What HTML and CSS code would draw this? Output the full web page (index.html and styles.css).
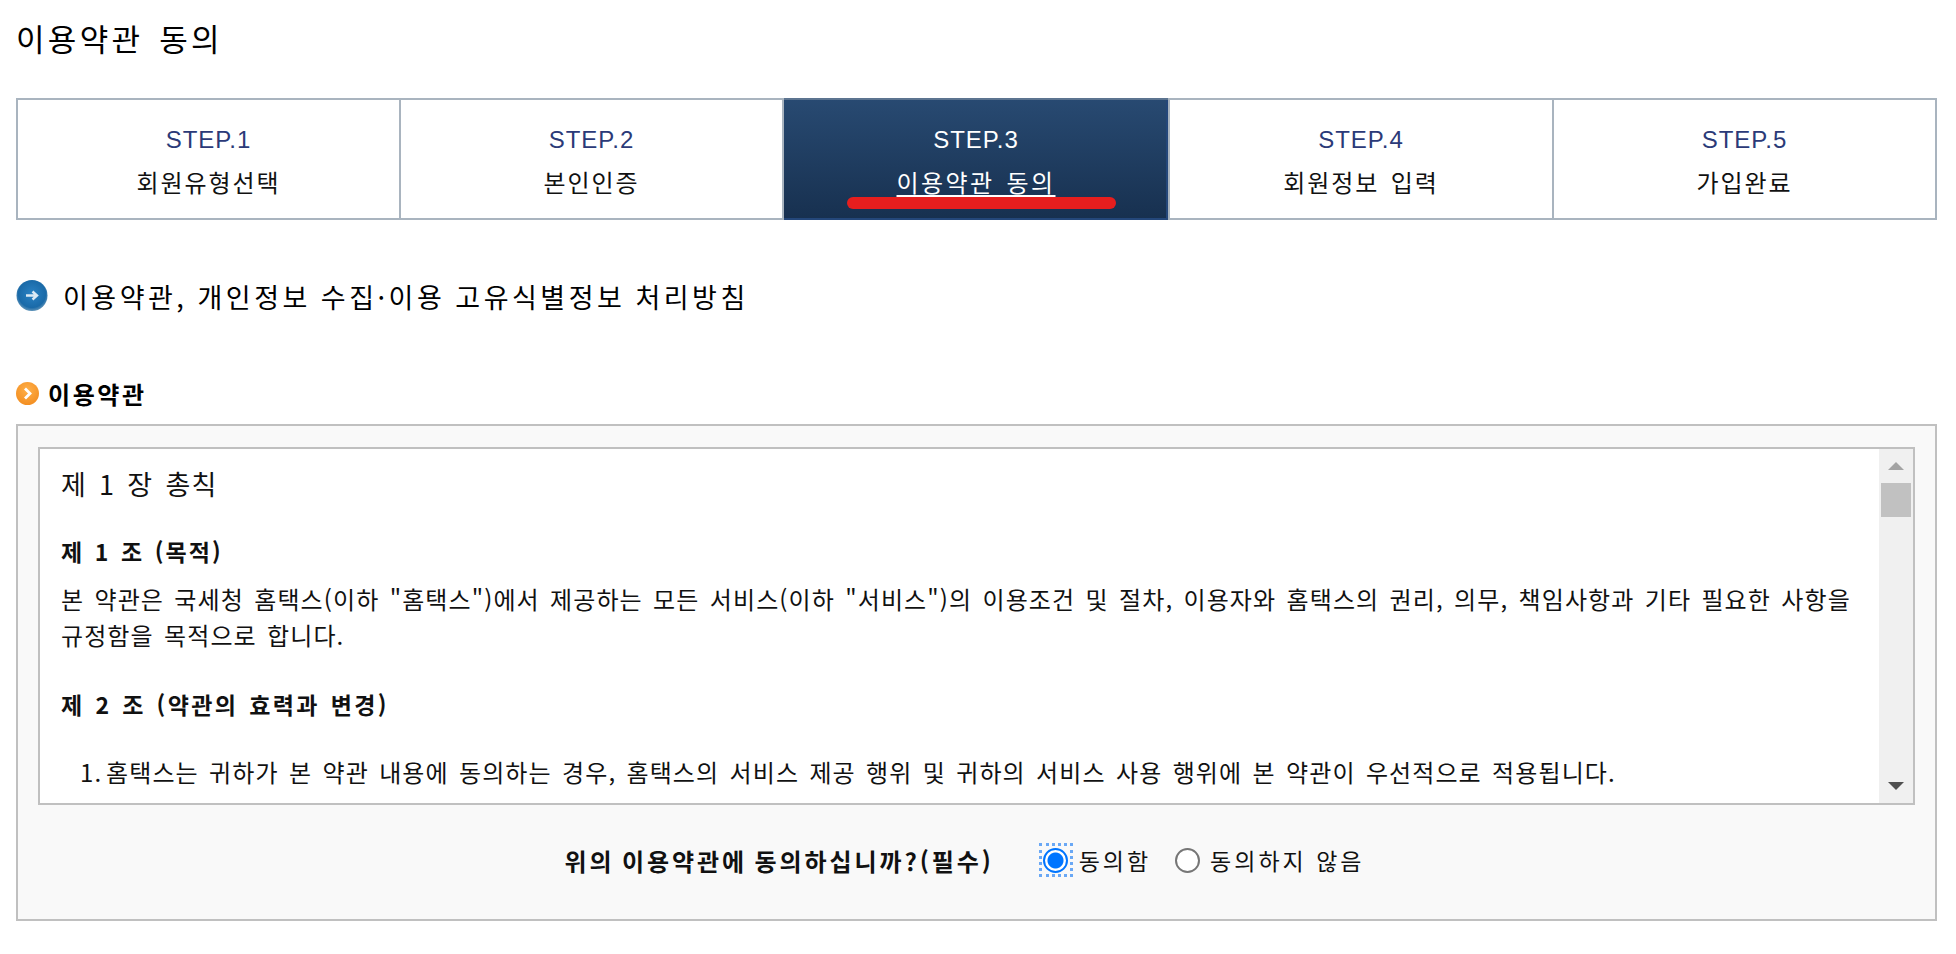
FILE: index.html
```html
<!DOCTYPE html>
<html lang="ko">
<head>
<meta charset="utf-8">
<title>이용약관 동의</title>
<link rel="stylesheet" href="styles.css">
</head>
<body>
<h1 class="page-title">이용약관 동의</h1>
<ol class="steps">
  <li class="step"><span class="step-no">STEP.1</span><span class="step-name">회원유형선택</span></li>
  <li class="step"><span class="step-no">STEP.2</span><span class="step-name">본인인증</span></li>
  <li class="step step-active"><span class="step-no">STEP.3</span><span class="step-name">이용약관 동의</span><span class="red-mark"></span></li>
  <li class="step"><span class="step-no">STEP.4</span><span class="step-name">회원정보 입력</span></li>
  <li class="step"><span class="step-no">STEP.5</span><span class="step-name">가입완료</span></li>
</ol>
<h2 class="section-title">
  <svg width="32" height="32" viewBox="0 0 32 32"><defs><radialGradient id="b" cx="50%" cy="45%" r="55%"><stop offset="0" stop-color="#2a82c4"/><stop offset=".8" stop-color="#1a6aa8"/><stop offset="1" stop-color="#5f93b8"/></radialGradient></defs><circle cx="16" cy="15.5" r="15.5" fill="url(#b)"/><path d="M10 15.5h11M16.5 11.500l4.500 4-4.500 4" fill="none" stroke="#dbe9f4" stroke-width="2.400"/></svg>
  <span>이용약관, 개인정보 수집·이용 고유식별정보 처리방침</span>
</h2>
<h3 class="sub-title">
  <svg width="23" height="23" viewBox="0 0 23 23"><defs><radialGradient id="o" cx="50%" cy="35%" r="70%"><stop offset="0" stop-color="#ffb04a"/><stop offset="1" stop-color="#f28c1e"/></radialGradient></defs><circle cx="11.500" cy="11.500" r="11.500" fill="url(#o)"/><path d="M9 6.500l5 5-5 5" fill="none" stroke="#fff" stroke-width="2.800"/></svg>
  <span>이용약관</span>
</h3>
<section class="panel">
  <div class="terms">
    <div class="terms-text">
      <p class="chapter">제 1 장 총칙</p>
      <p class="article">제 1 조 (목적)</p>
      <p class="body-text">본 약관은 국세청 홈택스(이하 "홈택스")에서 제공하는 모든 서비스(이하 "서비스")의 이용조건 및 절차, 이용자와 홈택스의 권리, 의무, 책임사항과 기타 필요한 사항을 규정함을 목적으로 합니다.</p>
      <p class="article article-2">제 2 조 (약관의 효력과 변경)</p>
      <p class="list-item"><span class="list-no">1. </span>홈택스는 귀하가 본 약관 내용에 동의하는 경우, 홈택스의 서비스 제공 행위 및 귀하의 서비스 사용 행위에 본 약관이 우선적으로 적용됩니다.</p>
    </div>
    <div class="scrollbar">
      <span class="arrow-up"></span>
      <span class="thumb"></span>
      <span class="arrow-down"></span>
    </div>
  </div>
  <div class="agree">
    <strong class="agree-q">위의 이용약관에 동의하십니까?(필수)</strong>
    <span class="radio-focus"><span class="radio radio-on"></span></span><span class="radio-label">동의함</span>
    <span class="radio"></span><span class="radio-label">동의하지 않음</span>
  </div>
</section>
</body>
</html>
```
FILE: styles.css
```css
* { box-sizing: border-box; }
html, body { margin: 0; padding: 0; }
body {
  background: #fff;
  color: #111;
  font-family: "Noto Sans CJK KR", "Liberation Sans", sans-serif;
  padding: 0 19px 0 16px;
  height: 954px;
  overflow: hidden;
}
.page-title { margin: 0; padding-top: 18px; height: 98px; font-size: 31px; font-weight: 400; line-height: 40px; letter-spacing: 3.3px; word-spacing: 4px; color: #000; }
.steps { display: grid; grid-template-columns: 381px 383px 386px 384px 383px; list-style: none; margin: 0; padding: 0; height: 122px; border: 2px solid #a9b4bf; }
.step { display: flex; flex-direction: column; align-items: center; border-left: 2px solid #a9b4bf; padding-top: 20px; position: relative; }
.step:first-child { border-left: 0; }
.step-no { font-family: "Liberation Sans", sans-serif; font-size: 24px; line-height: 40px; letter-spacing: 1px; color: #2b3a78; }
.step-name { font-size: 24px; line-height: 44px; letter-spacing: 1.9px; word-spacing: 3px; color: #111; }
.step-active { background: linear-gradient(#284a72, #17304f) padding-box; margin: -2px 0; height: 122px; padding-top: 22px; box-shadow: inset 0 4px 0 -2px #5c7490, inset -2px 0 0 #24477a, inset 0 -2px 0 #24477a, inset 0 2px 0 #24477a; }
.step-active .step-no { color: #fff; }
.step-active .step-name { color: #fff; text-decoration: underline; text-underline-offset: 3px; letter-spacing: 2.4px; }
.red-mark { position: absolute; left: 63px; top: 99px; width: 269px; height: 12px; border-radius: 6px; background: #e61e1e; }
.section-title { display: flex; align-items: center; gap: 15px; margin: 0; padding-top: 47px; height: 150px; padding-bottom: 45px; font-size: 27px; font-weight: 400; color: #000; }
.section-title span { letter-spacing: 3.5px; word-spacing: -1px; }
.sub-title { display: flex; align-items: center; gap: 9px; margin: 0; height: 54px; padding-bottom: 8px; font-size: 24px; font-weight: 700; color: #000; }
.sub-title span { letter-spacing: 2.6px; }
.panel { height: 497px; border: 2px solid #c0c0c0; background: #f9f9f9; padding: 21px 20px 0; }
.terms { display: flex; height: 358px; border: 2px solid #c0c0c0; background: #fff; }
.terms-text { flex: 1; padding: 15px 21px 0; font-size: 24px; line-height: 36px; overflow: hidden; letter-spacing: 1.1px; word-spacing: 2.5px; word-break: keep-all; }
.terms-text p { margin: 0; }
.chapter { font-size: 27px; line-height: 40px; word-spacing: 3.5px; }
.article { font-weight: 700; margin-top: 29px !important; font-size: 23px; letter-spacing: 2.1px; word-spacing: 2px; }
.article-2 { margin-top: 33px !important; letter-spacing: 2.4px; }
.body-text { margin-top: 12px !important; }
.list-item { margin-top: 32px !important; padding-left: 19px; }
.list-no { word-spacing: -4px; }
.scrollbar { width: 34px; background: #f0f0f0; position: relative; }
.thumb { position: absolute; left: 2px; right: 2px; top: 34px; height: 34px; background: #c1c1c1; }
.arrow-up, .arrow-down { position: absolute; left: 9px; width: 0; height: 0; border-left: 8px solid transparent; border-right: 8px solid transparent; }
.arrow-up { top: 13px; border-bottom: 8px solid #a3a3a3; }
.arrow-down { bottom: 13px; border-top: 8px solid #505050; }
.agree { display: flex; align-items: center; justify-content: center; height: 110px; font-size: 23px; letter-spacing: 3px; word-spacing: 0; }
.agree-q { margin-right: 45px; font-size: 24px; letter-spacing: 2.9px; word-spacing: -2px; }
.radio { width: 25px; height: 25px; border-radius: 50%; border: 2px solid #767676; background: #fff; margin-right: 10px; flex: none; }
.radio-focus { display: flex; align-items: center; justify-content: center; width: 34px; height: 34px; outline: 3px dotted #6aa8f5; outline-offset: -3px; margin-right: 6px; }
.radio-on { margin: 0; border-color: #0075ff; background: radial-gradient(circle, #0075ff 0 7.5px, #fff 8.5px); }
.radio-label { margin-right: 24px; }
```
